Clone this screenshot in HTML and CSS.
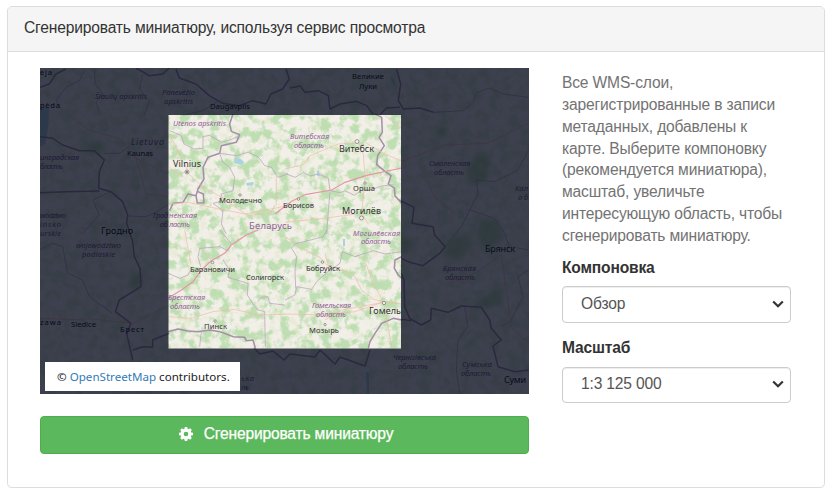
FILE: index.html
```html
<!DOCTYPE html>
<html lang="ru">
<head>
<meta charset="utf-8">
<title>Миниатюра</title>
<link rel="stylesheet" href="styles.css">
</head>
<body>
<section class="panel">
  <header class="panel-heading">Сгенерировать миниатюру, используя сервис просмотра</header>
  <div class="panel-body">
    <div class="preview">
      <div class="map">
        <svg class="map-canvas" viewBox="40 68 489 326" width="489" height="326">
          <defs>
            <filter id="woods" x="0" y="0" width="100%" height="100%" color-interpolation-filters="sRGB">
              <feTurbulence type="fractalNoise" baseFrequency="0.1" numOctaves="5" seed="12"/>
              <feColorMatrix values="0 0 0 0 0.70  0 0 0 0 0.86  0 0 0 0 0.65  5 0 0 0 -2.3"/>
            </filter>
            <filter id="fields" x="0" y="0" width="100%" height="100%" color-interpolation-filters="sRGB">
              <feTurbulence type="fractalNoise" baseFrequency="0.12" numOctaves="3" seed="5"/>
              <feColorMatrix values="0 0 0 0 0.86  0 0 0 0 0.90  0 0 0 0 0.74  0 5 0 0 -2.4"/>
            </filter>
            <filter id="soft"><feGaussianBlur stdDeviation="2"/></filter>
          </defs>
          <rect class="land" x="40" y="68" width="489" height="326"/>
          <rect x="40" y="68" width="489" height="326" filter="url(#fields)" opacity=".4"/>
          <rect x="40" y="68" width="489" height="326" filter="url(#woods)" opacity=".3"/>
          <rect x="168" y="115" width="233" height="233" filter="url(#woods)" opacity=".7"/>
          <g class="wood" filter="url(#soft)">
            <path d="M478 150l12 6-2 22-14 8-9-14zM448 240l18-6 8 10-16 16-14-4zM480 218l18 2 4 20-16 10-8-14zM478 300l26-14-4 18-24 6zM130 276l12-2 2 10-12 8zM85 143l14-2 6 10-14 4zM436 127l10 0 0 10-10 0zM400 236l14 4-6 14-12-2z"/>
          </g>
          <path class="water" d="M40 108h9l-1 20-3 16-5 3zM235 158l6 1 3 3-2 3-8-2zM246 183l8-1-1 3-6 1zM317 171l2-1 1 6-3 0zM343 239l2 0 0 7-2 0zM278 276l3-1 0 3-3 0zM366 372l3 0 0 22-2 0zM390 76l4 3 2 8-4-4z"/>

          <g transform="translate(168 114) scale(.33333)">
            <path class="border" d="M195 0L185 30 190 52 215 62 205 85 160 95 155 118 120 130 105 160 108 195 90 225 84 245 60 240 45 265 15 268 5 290M84 245L88 267 108 266 106 240 88 232"/>
            <path class="region" d="M5 50L40 65 48 90 78 105 105 103 105 68 125 64 160 85 190 76 215 66M155 118L165 145 185 160 200 190 195 230 160 240 158 262 135 268 165 290 160 330 175 360M155 118L205 125 240 115 270 128 290 155 310 160 330 190 360 180"/>
            <path class="road" d="M5 60L60 172 30 180 5 160M58 175L100 215 160 250 240 305 290 300M0 270L60 265 130 280 230 300 360 275M325 185L325 270 300 305"/>
          </g>
          <g transform="translate(285 114) scale(.33333)">
            <path class="border" d="M270 0L290 10 292 55 282 70 298 95 278 125 275 152 300 172 318 185 310 210 328 222 330 245 350 268"/>
            <path class="region" d="M0 178L30 190 55 176 75 186 100 180 130 192 135 230 165 236 180 230 208 244 230 228 265 225 290 216 325 212M135 235L130 290 125 360"/>
            <path class="road" d="M0 165L55 152 75 125 160 90 215 88M218 82L235 120 240 190 230 300 250 330M300 5L330 30 348 40M240 85L300 120 348 140M0 325L100 315 215 300"/>
            <path class="highway" d="M-30 300L20 262 60 242 140 228 180 205 245 184 350 162"/>
          </g>
          <g transform="translate(168 230) scale(.33333)">
            <path class="border" d="M0 305L30 297 60 303 90 305 125 300 155 305 175 312 195 320 230 322 235 332 255 330 262 354"/>
            <path class="region" d="M155 0L190 40 180 62 155 50 95 55 90 80 98 110M165 90L185 120 180 142 240 160 238 195 255 222 270 240 290 245 292 350M270 215L280 202 300 200 305 220 350 225M0 130L35 145 60 135 68 120M100 305L95 350"/>
            <path class="road" d="M0 260L70 265 135 245 200 238 270 255 350 253M50 0L68 100M130 90L100 60"/>
            <path class="highway" d="M270 0L235 15 190 45 170 70 130 92 100 120 75 155 40 180 0 205"/>
          </g>
          <g transform="translate(285 230) scale(.33333)">
            <path class="border" d="M350 80L330 90 328 115 340 135 350 145M350 270L325 265 290 280 270 310 255 335 250 354"/>
            <path class="region" d="M125 0L115 20 30 42 20 55 35 80 30 120 32 175M165 100L172 65 210 80 265 62 300 72 350 65M0 210L30 195 35 170 80 178 95 155 125 128 165 100"/>
            <path class="road" d="M0 20L60 60 105 82 125 105 205 132 230 180 265 208 295 215 350 222M0 252L120 255 210 245 295 216M235 80L265 160 295 215 320 350M120 270L170 240 290 218M130 110L120 70"/>
          </g>
          <g class="outer">
            <g transform="translate(36 64) scale(.33333)">
              <path class="border" d="M12 70L40 60 60 30 90 15M300 12L340 35 380 30 400 12M420 15L430 42 480 60 520 95 560 118 610 125 650 110 690 120 705 90 740 75 760 45 750 15"/>
              <path class="region" d="M175 15L178 60 200 90 180 115 195 155M75 135L60 110 90 70 130 50 145 20M320 30L310 75 340 110 325 155M440 155L500 140 545 112"/>
            </g>
            <g transform="translate(290 64) scale(.33333)">
              <path class="border" d="M0 72L30 66 45 85 85 80 115 95 120 135 150 120 200 112 230 125 250 152M270 152L290 132 330 130M320 15L332 60 325 110 340 135 390 132 430 145"/>
              <path class="region" d="M430 145L520 140 550 115 560 85 600 72 640 90 715 100"/>
            </g>
            <g transform="translate(36 110) scale(.33333)">
              <path class="border" d="M12 80L50 85 80 105 130 122 175 122 205 150 190 185 188 235 225 245 260 275 275 315 272 340 290 395 295 440 312 475 315 530 250 570 238 605 285 640 272 670 290 750M12 248L90 245 190 243M290 720L320 710 350 712 350 690 400 670"/>
              <path class="region" d="M272 318L330 320 350 312 395 285M10 420L50 400 80 410 95 490 140 510 160 560 230 610M205 130L250 130 280 110M225 245L170 270 190 315 140 370"/>
              <path class="road" d="M90 10L160 60 250 85 300 145 395 190M300 145L330 250 395 260M290 640L390 590M150 625L290 640M12 625L150 630"/>
            </g>
            <g transform="translate(398 110) scale(.33333)">
              <path class="border" d="M0 268L48 292 42 340 105 350 110 375 142 410 125 430 75 467 30 455 10 445M10 490L18 510 20 590 35 625 70 645 98 630 100 595 150 607 190 588 250 592 275 630 280 655 310 690 285 708 300 770 350 785 392 780M10 628L40 632"/>
              <path class="region" d="M142 410L190 350 215 300 240 250 235 210 290 215 360 180 392 120M215 300L290 325 320 370 335 410 392 420M200 590L210 650 180 690 175 780 185 850M392 480L360 500 375 560 340 630 310 650"/>
              <path class="road" d="M10 155L140 105 270 100 392 40M80 200L110 260 170 310M310 435L230 490 160 520M310 435L340 650 392 700"/>
            </g>
            <path class="border edge" d="M254 348L260 354 273 351 284 360 290 354 315 357 320 350 335 364 340 357 365 366 370 350"/>
          </g>

          <g class="place dim">
            <text x="40" y="75" textLength="12">eja</text><text x="40" y="108" textLength="20">pėda</text>
            <text x="210" y="109" textLength="40">Daugavpils</text><text x="352" y="79" textLength="32">Великие</text><text x="359" y="89" textLength="18">Луки</text>
            <text x="127" y="156" textLength="26">Kaunas</text><text class="big" x="101" y="234" textLength="32">Гродно</text>
            <text x="40" y="325" textLength="21">zawa</text><text x="71" y="327" textLength="25">Siedlce</text><text x="120" y="332" textLength="24">Брест</text>
            <text class="big" x="485" y="252" textLength="30">Брянск</text><text class="big" x="504" y="383" textLength="22">Суми</text>
          </g>
          <g class="area dim">
            <text x="95" y="99" textLength="52">Šiaulių apskritis</text><text x="162" y="95" textLength="33">Panevėžio</text><text x="164" y="104" textLength="29">apskritis</text>
            <text class="big" x="131" y="145" textLength="33">Lietuva</text><text x="40" y="160" textLength="39">инградская</text><text x="40" y="169" textLength="23">бласть</text>
            <text x="40" y="218" textLength="26">wództwo</text><text x="40" y="227" textLength="21">ińsko</text><text x="40" y="236" textLength="21">urskie</text>
            <text x="76" y="248" textLength="45">województwo</text><text x="82" y="257" textLength="33">podlaskie</text><text x="153" y="218" textLength="15">Грод</text><text x="160" y="227" textLength="8">об</text>
            <text x="429" y="166" textLength="41">Смоленская</text><text x="434" y="175" textLength="30">область</text><text x="515" y="191" textLength="13">Кал</text><text x="518" y="200" textLength="10">об</text>
            <text x="443" y="271" textLength="33">Брянская</text><text x="445" y="280" textLength="30">область</text><text x="393" y="360" textLength="43">Чернігівська</text><text x="398" y="369" textLength="30">область</text>
            <text x="462" y="367" textLength="30">Сумська</text><text x="461" y="376" textLength="30">область</text><text x="241" y="381" textLength="13">ька</text><text x="241" y="390" textLength="8">ть</text>
          </g>

          <path class="shade" fill-rule="evenodd" d="M40 68H529V394H40ZM168.500 115V348.500H401V115Z"/>
          <g class="area">
            <text x="173" y="126" textLength="53">Utenos apskritis</text>
            <text x="290" y="138.500" textLength="39">Витебская</text><text x="294" y="147.500" textLength="30">область</text>
            <text x="169" y="218" textLength="28">ненская</text><text x="169" y="227" textLength="21">ласть</text>
            <text class="country" x="249" y="228.500" textLength="43">Беларусь</text>
            <text x="353" y="235.500" textLength="47">Могилёвская</text><text x="361" y="244" textLength="30">область</text>
            <text x="168" y="299.500" textLength="37">Брестская</text><text x="170" y="308.500" textLength="30">область</text>
            <text x="312" y="307.500" textLength="39">Гомельская</text><text x="316" y="316.500" textLength="30">область</text>
          </g>
          <g class="place">
            <text class="big" x="173" y="167" textLength="28">Vilnius</text><text x="219" y="203" textLength="43">Молодечно</text>
            <text class="big" x="339" y="152" textLength="35">Витебск</text><text x="353" y="190.500" textLength="22">Орша</text>
            <text x="283" y="208" textLength="31">Борисов</text><text class="big" x="342" y="214" textLength="39">Могилёв</text>
            <text x="190" y="271.500" textLength="45">Барановичи</text><text x="246" y="279.500" textLength="38">Солигорск</text>
            <text x="306" y="271" textLength="34">Бобруйск</text><text class="big" x="369" y="313.500" textLength="32">Гомель</text>
            <text x="204" y="329" textLength="23">Пинск</text><text x="309" y="333" textLength="30">Мозырь</text>
          </g>
          <g class="town"><circle cx="187" cy="172" r="2"/><circle cx="357" cy="141.500" r="2"/><circle cx="361.500" cy="218" r="2"/><circle cx="384" cy="303" r="1.700"/><circle cx="298.500" cy="199" r="1.300"/><circle cx="240" cy="195" r="1.200"/><circle cx="212.500" cy="262.500" r="1.300"/><circle cx="322.500" cy="262" r="1.300"/><circle cx="215" cy="321" r="1.200"/><circle cx="325" cy="324.500" r="1.200"/><circle cx="365" cy="183" r="1.200"/></g>
          <circle class="capital" cx="187" cy="172" r=".9"/>
        </svg>
        <div class="attribution">© <a>OpenStreetMap</a> contributors.</div>
      </div>
      <button class="generate" type="button">
        <svg class="gear" viewBox="0 0 14 14"><path fill-rule="evenodd" d="M5.800 0h2.400l.4 1.800.9.400L11.100 1.200l1.700 1.700-1 1.600.4.900 1.800.4v2.400l-1.800.4-.4.900 1 1.600-1.700 1.700-1.600-1-.9.400-.4 1.800H5.800l-.4-1.800-.9-.4-1.600 1-1.700-1.700 1-1.600-.4-.9L0 8.200V5.800l1.800-.4.4-.9-1-1.600 1.700-1.700 1.600 1 .9-.4zM7 4.700a2.300 2.300 0 1 0 0 4.600 2.300 2.300 0 0 0 0-4.600z"/></svg>
        <span>Сгенерировать миниатюру</span>
      </button>
    </div>
    <div class="options">
      <p class="help">Все WMS-слои,<br>зарегистрированные в записи<br>метаданных, добавлены к<br>карте. Выберите компоновку<br>(рекомендуется миниатюра),<br>масштаб, увеличьте<br>интересующую область, чтобы<br>сгенерировать миниатюру.</p>
      <div class="label">Компоновка</div>
      <div class="select"><span>Обзор</span><svg class="chevron" viewBox="0 0 12 8"><path d="M1.200 1.500L6 6.200l4.800-4.700"/></svg></div>
      <div class="label second">Масштаб</div>
      <div class="select"><span>1:3 125 000</span><svg class="chevron" viewBox="0 0 12 8"><path d="M1.200 1.500L6 6.200l4.800-4.700"/></svg></div>
    </div>
  </div>
</section>
</body>
</html>
```
FILE: styles.css
```css
* { box-sizing: border-box; }
body {
  margin: 0;
  padding: 6px 7px 0;
  background: #fff;
  color: #333;
  font-family: "Liberation Sans", Arial, sans-serif;
  font-size: 15.6px;
  letter-spacing: -.17px;
}
.panel {
  width: 818px;
  height: 482px;
  border: 1px solid #ddd;
  border-radius: 5px;
  box-shadow: 0 1px 1px rgba(0, 0, 0, .05);
}
.panel-heading {
  height: 45px;
  padding-left: 16px;
  border-bottom: 1px solid #ddd;
  border-radius: 4px 4px 0 0;
  background: #f5f5f5;
  line-height: 42px;
  white-space: nowrap;
}
.panel-body {
  display: flex;
  gap: 33px;
  padding: 16px 32px 0;
}
.preview { width: 489px; }
.map {
  position: relative;
  height: 326px;
}
.map-canvas { display: block; letter-spacing: 0; }
.land { fill: #f2efe9; }
.wood { fill: #add19e; opacity: .7; }
.water { fill: #aad3df; }
.border, .region, .road, .highway { fill: none; stroke-linejoin: round; }
.border { stroke: #a58ea8; stroke-width: 4.5px; }
.region { stroke: #b9a5bb; stroke-width: 3px; opacity: .75; }
.road { stroke: #f3b9a4; stroke-width: 2.5px; opacity: .8; }
.highway { stroke: #e795a4; stroke-width: 3.5px; }
.edge { stroke-width: 1.5px; }
.shade { fill: rgba(0, 5, 25, .75); }
.place, .area {
  font-family: "Noto Sans", sans-serif;
  font-size: 7.6px;
}
.place { fill: #333; }
.area { fill: #92619a; font-style: italic; }
.place .big { font-size: 9px; }
.area .big { font-size: 9px; }
.area .country { font-size: 9.5px; font-style: normal; }
.dim.place { fill: #222; }
.dim.area { fill: #7d5c8c; }
.town { fill: #eee; stroke: #666; stroke-width: .6px; }
.capital { fill: #555; }
.attribution {
  position: absolute;
  left: 5px;
  bottom: 3px;
  width: 195px;
  height: 29px;
  padding-left: 12px;
  background: #fff;
  color: #222;
  font: 11.6px/30px "Noto Sans", sans-serif;
  letter-spacing: 0;
  white-space: nowrap;
}
.attribution a { color: #337ab7; }
.generate {
  display: flex;
  align-items: center;
  justify-content: center;
  gap: 11px;
  width: 489px;
  height: 38px;
  margin-top: 22px;
  padding: 0 0 2px 3px;
  border: 1px solid #4cae4c;
  border-radius: 4px;
  background: #5cb85c;
  color: #fff;
  font: 15.6px "Liberation Sans", Arial, sans-serif;
  letter-spacing: -.17px;
  -webkit-text-stroke: .25px #fff;
}
.gear { width: 14px; height: 14px; fill: #fff; }
.options { width: 229px; }
.help {
  margin: 4px 0 0;
  color: #737373;
  line-height: 21.85px;
  white-space: nowrap;
}
.label {
  height: 29px;
  margin-top: 10px;
  padding-top: 1px;
  font-weight: bold;
  line-height: 20px;
}
.label.second { margin-top: 14px; height: 30px; }
.select {
  display: flex;
  align-items: center;
  justify-content: space-between;
  height: 37px;
  padding: 0 6px 1px 18px;
  border: 1px solid #ccc;
  border-radius: 4px;
  box-shadow: inset 0 1px 1px rgba(0, 0, 0, .075);
  color: #555;
}
.second + .select { height: 36px; }
.chevron {
  width: 12px;
  height: 8px;
  fill: none;
  stroke: #333;
  stroke-width: 2.2px;
}
```
